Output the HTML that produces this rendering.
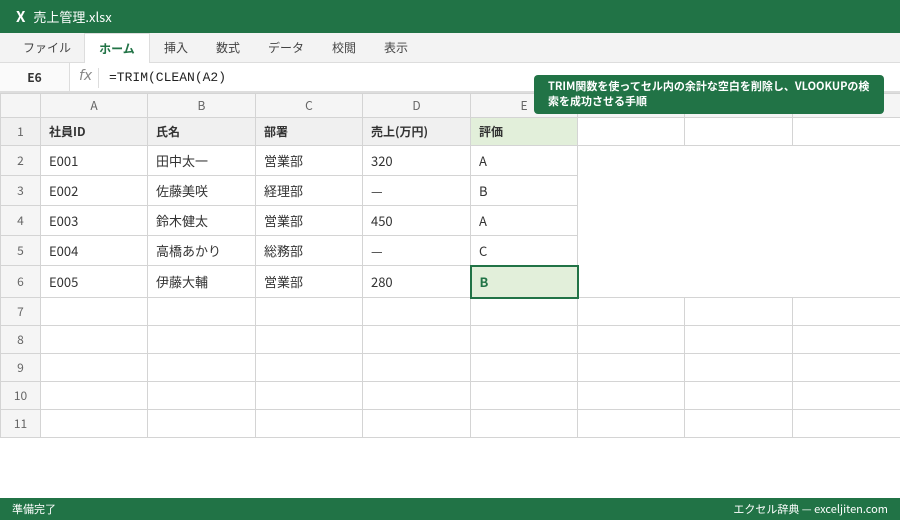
<!DOCTYPE html>
<html><head><meta charset="utf-8"><style>
*{margin:0;padding:0;box-sizing:border-box}
body{width:900px;height:520px;overflow:hidden;background:#fff;font-family:"Noto Sans CJK JP",sans-serif;position:relative;color:#333}
.title{position:absolute;left:0;top:0;width:900px;height:33px;background:#217346;color:#fff;font-size:13px;line-height:33px;padding-left:16px}
.title b{font-size:15px;margin-right:8px}
.tabs{position:absolute;top:33px;left:0;width:900px;height:30px;background:#f3f3f3;border-bottom:1px solid #ddd}
.tab{position:absolute;top:0;height:30px;line-height:30px;font-size:12px;color:#444}
.tab.act{background:#fff;border:1px solid #ddd;border-bottom:none;height:31px;color:#217346;font-weight:bold;text-align:center}
.fb{position:absolute;top:63px;left:0;width:900px;height:30px;border-bottom:2px solid #ddd;background:#fff}
.nb{position:absolute;left:0;top:0;width:70px;height:28px;line-height:30px;text-align:center;font-size:12px;font-weight:bold;border-right:1px solid #ddd;background:#fafafa}
.fx{position:absolute;left:79px;top:5px;font-style:italic;color:#888;font-size:14px;font-family:"DejaVu Sans",sans-serif}
.fsep{position:absolute;left:98px;top:5px;height:20px;border-left:1px solid #ddd}
.ftxt{position:absolute;left:109px;top:7px;font-family:"Liberation Mono",monospace;font-size:13px;color:#222}
table{position:absolute;left:0;top:93px;border-collapse:collapse;table-layout:fixed;width:900px}
td{border:1px solid #d4d4d4;font-size:13px;padding-left:8px;white-space:nowrap;overflow:hidden}
td.h{background:#f5f5f5;color:#666;text-align:center;padding:0;font-size:12px}
tr.r1 td{background:#f0f0f0;font-weight:bold;font-size:12px}
tr.r1 td.h{font-weight:normal}
tr.r1 td.sel{background:#e2efda}
td.e{border:none}
td.cur{border:2px solid #217346;background:#e2efda;color:#217346;font-weight:bold}
.tip{position:absolute;left:534px;top:75px;width:350px;height:39px;background:#217346;color:#fff;font-size:11px;font-weight:bold;line-height:15px;padding:4px 14px;border-radius:4px}
.status{position:absolute;left:0;top:498px;width:900px;height:22px;background:#217346;color:#fff;font-size:11px;line-height:22px;padding:0 12px}
.status span{float:right}
</style></head><body>
<div class="title"><b>X</b>売上管理.xlsx</div>
<div class="tabs">
<div class="tab" style="left:23px">ファイル</div>
<div class="tab act" style="left:84px;width:66px">ホーム</div>
<div class="tab" style="left:164px">挿入</div>
<div class="tab" style="left:216px">数式</div>
<div class="tab" style="left:268px">データ</div>
<div class="tab" style="left:332px">校閲</div>
<div class="tab" style="left:384px">表示</div>
</div>
<div class="fb"><div class="nb">E6</div><div class="fx">fx</div><div class="fsep"></div><div class="ftxt">=TRIM(CLEAN(A2)</div></div>
<table>
<colgroup><col style="width:40px"><col style="width:107px"><col style="width:108px"><col style="width:107px"><col style="width:108px"><col style="width:107px"><col style="width:107px"><col style="width:108px"><col style="width:108px"></colgroup>
<tr style="height:24px"><td class="h"></td><td class="h">A</td><td class="h">B</td><td class="h">C</td><td class="h">D</td><td class="h">E</td><td class="h"></td><td class="h"></td><td class="h"></td></tr>
<tr class="r1" style="height:28px"><td class="h">1</td><td>社員ID</td><td>氏名</td><td>部署</td><td>売上(万円)</td><td class="sel">評価</td><td style="background:#fff"></td><td style="background:#fff"></td><td style="background:#fff"></td></tr>
<tr style="height:30px"><td class="h">2</td><td>E001</td><td>田中太一</td><td>営業部</td><td>320</td><td>A</td><td class="e"></td><td class="e"></td><td class="e"></td></tr>
<tr style="height:30px"><td class="h">3</td><td>E002</td><td>佐藤美咲</td><td>経理部</td><td>—</td><td>B</td><td class="e"></td><td class="e"></td><td class="e"></td></tr>
<tr style="height:30px"><td class="h">4</td><td>E003</td><td>鈴木健太</td><td>営業部</td><td>450</td><td>A</td><td class="e"></td><td class="e"></td><td class="e"></td></tr>
<tr style="height:30px"><td class="h">5</td><td>E004</td><td>高橋あかり</td><td>総務部</td><td>—</td><td>C</td><td class="e"></td><td class="e"></td><td class="e"></td></tr>
<tr style="height:32px"><td class="h">6</td><td>E005</td><td>伊藤大輔</td><td>営業部</td><td>280</td><td class="cur">B</td><td class="e"></td><td class="e"></td><td class="e"></td></tr>
<tr style="height:28px"><td class="h">7</td><td></td><td></td><td></td><td></td><td></td><td></td><td></td><td></td></tr>
<tr style="height:28px"><td class="h">8</td><td></td><td></td><td></td><td></td><td></td><td></td><td></td><td></td></tr>
<tr style="height:28px"><td class="h">9</td><td></td><td></td><td></td><td></td><td></td><td></td><td></td><td></td></tr>
<tr style="height:28px"><td class="h">10</td><td></td><td></td><td></td><td></td><td></td><td></td><td></td><td></td></tr>
<tr style="height:28px"><td class="h">11</td><td></td><td></td><td></td><td></td><td></td><td></td><td></td><td></td></tr>
</table>
<div class="tip">TRIM関数を使ってセル内の余計な空白を削除し、VLOOKUPの検<br>索を成功させる手順</div>
<div class="status">準備完了<span>エクセル辞典 — exceljiten.com</span></div>
</body></html>
